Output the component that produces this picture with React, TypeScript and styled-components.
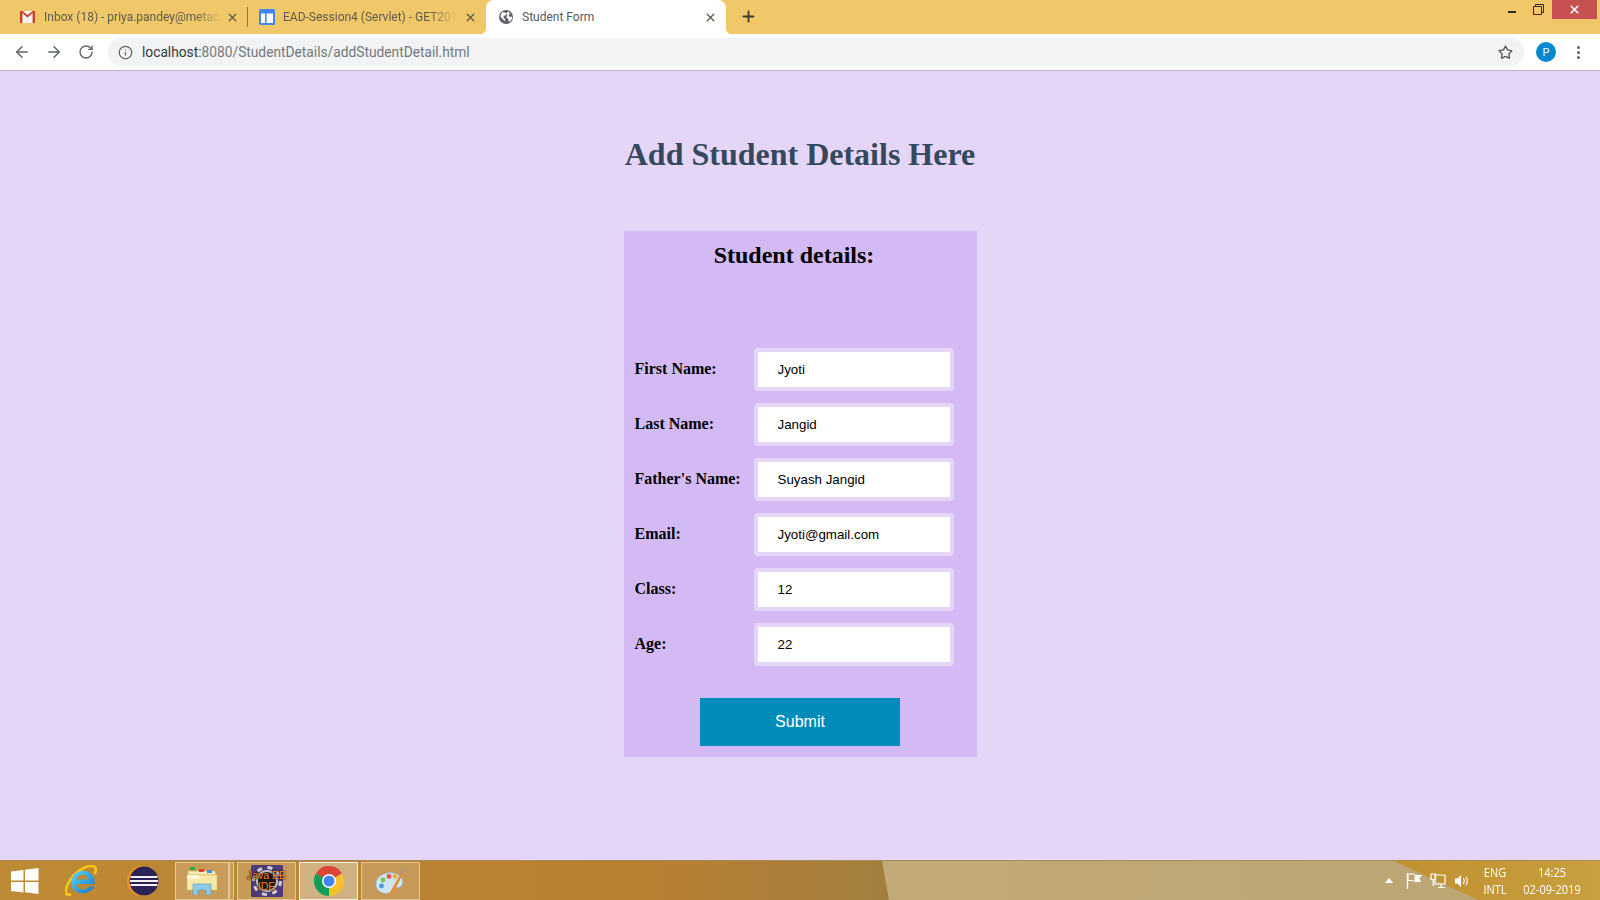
import React from "react";
import styled, { createGlobalStyle } from "styled-components";
import { ArrowLeft, ArrowRight, RotateCw, Info, Star, X, Plus } from "lucide-react";

const Global = createGlobalStyle`
  html, body { margin: 0; padding: 0; height: 100%; overflow: hidden; }
  #root { height: 100%; }
`;

const Screen = styled.div`
  width: 1600px;
  height: 900px;
  display: flex;
  flex-direction: column;
  overflow: hidden;
  font-family: "Roboto", "Liberation Sans", sans-serif;
`;

const TabStrip = styled.div`
  height: 34px;
  flex: none;
  background: #f0c869;
  display: flex;
  align-items: stretch;
  position: relative;
`;

const Tab = styled.div<{ $active?: boolean; $width: number; $pad: number }>`
  position: relative;
  width: ${(p) => p.$width}px;
  flex: none;
  box-sizing: border-box;
  padding-left: ${(p) => p.$pad}px;
  display: flex;
  align-items: center;
  background: ${(p) => (p.$active ? "#ffffff" : "transparent")};
  border-radius: ${(p) => (p.$active ? "8px 8px 0 0" : "0")};
  color: ${(p) => (p.$active ? "#555a60" : "#5e5a4c")};
  font-size: 12px;
  ${(p) =>
    p.$active
      ? `
    &::before, &::after {
      content: "";
      position: absolute;
      bottom: 0;
      width: 6px;
      height: 6px;
    }
    &::before { left: -6px; background: radial-gradient(circle at 0 0, transparent 6px, #fff 6.5px); }
    &::after { right: -6px; background: radial-gradient(circle at 100% 0, transparent 6px, #fff 6.5px); }
  `
      : ""}
`;

const TabTitle = styled.span<{ $fade?: boolean; $width: number; $gap: number }>`
  width: ${(p) => p.$width}px;
  margin-left: ${(p) => p.$gap}px;
  white-space: nowrap;
  overflow: hidden;
  ${(p) =>
    p.$fade
      ? "-webkit-mask-image: linear-gradient(90deg, #000 85%, transparent 100%); mask-image: linear-gradient(90deg, #000 85%, transparent 100%);"
      : ""}
`;

const TabClose = styled(X)<{ $gap: number }>`
  flex: none;
  width: 13px;
  height: 13px;
  margin-left: ${(p) => p.$gap}px;
  color: #5a5648;
  stroke-width: 2.4;
`;

const TabDivider = styled.div`
  width: 1px;
  height: 20px;
  align-self: center;
  background: #8d7a4c;
  flex: none;
`;

const NewTab = styled(Plus)`
  flex: none;
  width: 17px;
  height: 17px;
  margin: 8px 0 0 14px;
  color: #3d3a30;
  stroke-width: 2.6;
`;

const WindowControls = styled.div`
  margin-left: auto;
  display: flex;
  align-items: flex-start;
  padding-right: 3px;
`;

const MinButton = styled.div`
  width: 8px;
  height: 2px;
  margin: 11px 17px 0 0;
  background: #2c2a24;
`;

const RestoreIcon = styled.svg`
  width: 11px;
  height: 11px;
  margin: 4px 8px 0 0;
`;

const CloseButton = styled.div`
  width: 45px;
  height: 19px;
  background: #c75050;
  display: flex;
  align-items: center;
  justify-content: center;
  color: #fff;
`;

const Toolbar = styled.div`
  height: 36px;
  flex: none;
  background: #fff;
  border-bottom: 1px solid #bcb6c4;
  display: flex;
  align-items: center;
  color: #5f6368;
`;

const NavIcon = styled.div<{ $left: number }>`
  flex: none;
  width: 18px;
  height: 18px;
  margin-left: ${(p) => p.$left}px;
  display: flex;
  align-items: center;
  justify-content: center;
  color: #5f6368;
`;

const Omnibox = styled.div`
  flex: none;
  width: 1416px;
  height: 28px;
  margin-left: 13px;
  border-radius: 14px;
  background: #f1f3f4;
  display: flex;
  align-items: center;
  box-sizing: border-box;
  padding: 0 11px 0 10px;
`;

const Url = styled.div`
  margin-left: 9px;
  font-size: 13.75px;
  color: #74787c;
  white-space: nowrap;
  b { font-weight: 400; color: #35383b; }
`;

const StarIcon = styled(Star)`
  margin-left: auto;
  width: 15px;
  height: 15px;
  color: #55585c;
  stroke-width: 2.2;
`;

const Avatar = styled.div`
  flex: none;
  width: 20px;
  height: 20px;
  margin-left: 12px;
  border-radius: 50%;
  background: #0288d1;
  color: #fff;
  font-size: 11px;
  display: flex;
  align-items: center;
  justify-content: center;
`;

const MenuDots = styled.div`
  flex: none;
  margin-left: 21px;
  display: flex;
  flex-direction: column;
  gap: 2px;
  i { display: block; width: 3px; height: 3px; border-radius: 50%; background: #5f6368; }
`;

const Page = styled.main`
  flex: 1;
  min-height: 0;
  background: #e5d6f8;
  display: flex;
  flex-direction: column;
  align-items: center;
`;

const Heading = styled.h1`
  margin: 65px 0 0;
  height: 37px;
  font: bold 32px/37px "Liberation Serif", serif;
  color: #34495e;
  text-align: center;
`;

const Card = styled.form`
  width: 353px;
  height: 526px;
  margin-top: 58px;
  background: #d3baf4;
  display: flex;
  flex-direction: column;
`;

const CardTitle = styled.h2`
  margin: 11px 23px 0 11px;
  font: bold 24px/27px "Liberation Serif", serif;
  color: #000;
  text-align: center;
`;

const Fields = styled.div`
  margin: 79px 23px 0 11px;
  display: grid;
  grid-template-columns: 119px 200px;
  row-gap: 12px;
  align-items: center;
`;

const Label = styled.label`
  font: bold 16px/18px "Liberation Serif", serif;
  color: #000;
  position: relative;
  top: -1px;
`;

const Input = styled.input`
  box-sizing: border-box;
  width: 200px;
  height: 43px;
  padding: 0 0 0 20px;
  border: 4px solid #e5d6f8;
  border-radius: 4px;
  background: #fff;
  color: #000;
  font: 13.33px "Liberation Sans", Arial, sans-serif;
  outline: none;
`;

const Submit = styled.button`
  display: block;
  width: 200px;
  height: 48px;
  margin: 32px auto 0;
  padding: 0;
  border: 0;
  background: #008cba;
  color: #fff;
  font: 16px "Liberation Sans", Arial, sans-serif;
`;

const Taskbar = styled.footer`
  height: 40px;
  flex: none;
  position: relative;
  display: flex;
  align-items: stretch;
  background: #b8832f;
  border-top: 1px solid #a98a55;
  box-sizing: border-box;
  overflow: hidden;
`;

const Wallpaper = styled.svg`
  position: absolute;
  inset: 0;
  width: 100%;
  height: 100%;
`;

const PinnedIcon = styled.div<{ $left: number; $width: number }>`
  position: relative;
  flex: none;
  width: ${(p) => p.$width}px;
  margin-left: ${(p) => p.$left}px;
  display: flex;
  align-items: center;
  justify-content: center;
`;

const TaskButton = styled.div<{ $active?: boolean; $left: number; $width: number }>`
  position: relative;
  flex: none;
  box-sizing: border-box;
  width: ${(p) => p.$width}px;
  margin: 1px 0 0 ${(p) => p.$left}px;
  height: 38px;
  display: flex;
  align-items: center;
  justify-content: center;
  background: ${(p) => (p.$active ? "#d0b182" : "rgba(255,255,255,0.18)")};
  border: 1px solid ${(p) => (p.$active ? "#f7f1e6" : "rgba(255,235,195,0.55)")};
`;

const Tray = styled.div`
  position: relative;
  margin-left: auto;
  display: flex;
  align-items: center;
  color: #fff;
  font-family: "Open Sans", "Liberation Sans", sans-serif;
  font-size: 12.5px;
  padding-right: 16px;
`;

const TrayGlyph = styled.svg<{ $left: number }>`
  flex: none;
  margin-left: ${(p) => p.$left}px;
`;

const TrayText = styled.div<{ $left: number; $width: number }>`
  flex: none;
  width: ${(p) => p.$width}px;
  margin-left: ${(p) => p.$left}px;
  display: flex;
  flex-direction: column;
  align-items: center;
  line-height: 17px;
  white-space: nowrap;
  transform: scaleX(0.88);
`;

const JavaText = styled.div`
  position: absolute;
  inset: 0;
  display: flex;
  flex-direction: column;
  align-items: center;
  justify-content: center;
  font: 10.5px/11px "Liberation Sans", sans-serif;
  white-space: nowrap;
  color: #ff8f1f;
  text-shadow: 0 0 2px #000, 0 0 1px #000;
`;

const JavaIcon = styled.div`
  position: relative;
  width: 32px;
  height: 32px;
`;

const GmailIcon = () => (
  <svg width="15" height="12" viewBox="0 0 15 12">
    <rect width="15" height="12" fill="#f2f2f2" />
    <path d="M0 0h2.4v12H0zM12.6 0H15v12h-2.4z" fill="#d23f31" />
    <path d="M0 0h2.4l5.1 4 5.1-4H15L7.5 6.4z" fill="#d23f31" />
  </svg>
);

const SheetIcon = () => (
  <svg width="16" height="16" viewBox="0 0 16 16">
    <rect width="16" height="16" rx="1.5" fill="#4285f4" />
    <rect x="2" y="4.5" width="4" height="9.5" fill="#fff" />
    <rect x="7.5" y="4.5" width="6.5" height="9.5" fill="#fff" />
  </svg>
);

const GlobeIcon = () => (
  <svg width="14" height="14" viewBox="0 0 14 14">
    <circle cx="7" cy="7" r="7" fill="#5f6368" />
    <path d="M3 2.2l3 .3 1.4 1.3-1 1.6-1.7.4-.2 1.6 1.7 1.8v2L4 9.5 1.3 6.5zM9.5 1.6l1.5 2-1.500 1.500 1 1.600h2.200l.6 1-1.600 3.100-1.900 1-.6-3-1.800-1.300.6-2L7.300 3z" fill="#fff" />
  </svg>
);

const WindowsLogo = () => (
  <svg width="28" height="26" viewBox="0 0 28 26">
    <path d="M0 3.5 12.500 2v10.500H0zM14 1.800 27.500 0v12.500H14zM0 14h12.500v10.500L0 23zM14 14h13.500v12L14 24.200z" fill="#fff" />
  </svg>
);

const IeLogo = () => (
  <svg width="32" height="32" viewBox="0 0 32 32">
    <defs>
      <linearGradient id="ieb" x1="0" y1="0" x2="1" y2="1">
        <stop offset="0" stopColor="#5fd4f7" />
        <stop offset="1" stopColor="#0f78cc" />
      </linearGradient>
    </defs>
    <path d="M6 29C0 32 -1 25 4 17 9 8 21 0 27.500 1c4 .6 4 4.500 2 8" fill="none" stroke="#f5c518" strokeWidth="2.800" />
    <path d="M29.500 19H11.500c.5 6 9 7.500 13 2.500h4.500C24.500 31 8 31 6.500 19 5.500 9 15 4 22 6.500c5.500 1.800 8 7 7.500 12.500zM11.500 14.500h12c-.5-6.500-11-6.500-12 0z" fill="url(#ieb)" fillRule="evenodd" />
  </svg>
);

const EclipseLogo = () => (
  <svg width="32" height="30" viewBox="0 0 32 30">
    <circle cx="15" cy="15" r="15" fill="#f7941e" />
    <circle cx="17" cy="15" r="14.500" fill="#2c2255" />
    <rect x="3.500" y="10" width="27" height="2" fill="#f2f0f7" />
    <rect x="3" y="14" width="28" height="2" fill="#f2f0f7" />
    <rect x="3.500" y="18" width="27" height="2" fill="#f2f0f7" />
  </svg>
);

const FolderLogo = () => (
  <svg width="32" height="28" viewBox="0 0 32 28">
    <path d="M2 4h27l1 4H2z" fill="#f5e9b5" stroke="#c9b56b" strokeWidth=".6" />
    <rect x="4" y="0" width="5" height="3" fill="#2eaa3f" />
    <rect x="13" y="2" width="5" height="3" fill="#d9432f" />
    <rect x="21" y="3" width="5" height="3" fill="#3d8fe0" />
    <path d="M1 8h30v15H1z" fill="#f8eaa6" stroke="#cdb56a" strokeWidth=".6" />
    <path d="M1 8l11 0 3 4H1z" fill="#fdf7d8" />
    <path d="M7 17h18v11h-5v-5h-8v5H7z" fill="#8fcbe8" stroke="#4d9ccb" strokeWidth=".6" />
  </svg>
);

const GearLogo = () => (
  <svg width="32" height="32" viewBox="0 0 32 32">
    <rect width="32" height="32" rx="1.500" fill="#4d3a78" />
    <circle cx="16" cy="16" r="11" fill="#c4c4c4" />
    <circle cx="16" cy="16" r="13.500" fill="none" stroke="#cfcfcf" strokeWidth="3" strokeDasharray="5 5.600" />
    <circle cx="16" cy="16" r="9" fill="#1c1a20" />
  </svg>
);

const ChromeLogo = () => (
  <svg width="30" height="30" viewBox="0 0 30 30">
    <path d="M15 15 2 7.500A15 15 0 0 1 28 7.500z" fill="#db4437" />
    <path d="M15 15 28 7.500A15 15 0 0 1 15 30z" fill="#fbc02d" />
    <path d="M15 15 15 30A15 15 0 0 1 2 7.500z" fill="#0f9d58" />
    <circle cx="15" cy="15" r="7" fill="#fff" />
    <circle cx="15" cy="15" r="5.500" fill="#4285f4" />
  </svg>
);

const PaintLogo = () => (
  <svg width="32" height="32" viewBox="0 0 32 32">
    <path d="M1 19C1 11 10 7 18 8c8 1 11 7 9 12-2 4-6 1-8 4-2 4-7 5-11 4-4-1-7-4-7-9z" fill="#cfe6f3" stroke="#8eb6cf" strokeWidth=".6" />
    <circle cx="8" cy="15" r="2.400" fill="#7cbf4b" />
    <circle cx="14" cy="11.500" r="2.400" fill="#e2574c" />
    <circle cx="20" cy="11.500" r="2.400" fill="#e8b23c" />
    <circle cx="6.500" cy="21" r="2.400" fill="#4a9ad8" />
    <path d="M14 29 26 8l2 1L17 30z" fill="#e88b2e" />
    <path d="M25 9l3-7c2 1 3.500 2 3 3l-3.500 5z" fill="#b59678" />
  </svg>
);

const fields = [
  ["First Name:", "Jyoti"],
  ["Last Name:", "Jangid"],
  ["Father's Name:", "Suyash Jangid"],
  ["Email:", "Jyoti@gmail.com"],
  ["Class:", "12"],
  ["Age:", "22"],
];

export default function App() {
  return (
    <Screen>
      <Global />
      <TabStrip>
        <Tab $width={247} $pad={20}>
          <GmailIcon />
          <TabTitle $fade $width={177} $gap={9}>Inbox (18) - priya.pandey@metacube.com</TabTitle>
          <TabClose $gap={5} />
        </Tab>
        <TabDivider />
        <Tab $width={238} $pad={11}>
          <SheetIcon />
          <TabTitle $fade $width={173} $gap={8}>EAD-Session4 (Servlet) - GET2019</TabTitle>
          <TabClose $gap={8} />
        </Tab>
        <Tab $active $width={240} $pad={13}>
          <GlobeIcon />
          <TabTitle $width={175} $gap={9}>Student Form</TabTitle>
          <TabClose $gap={7} />
        </Tab>
        <NewTab />
        <WindowControls>
          <MinButton />
          <RestoreIcon viewBox="0 0 11 11">
            <path d="M2.500 2.500V.5h8v8H8.500M.5 2.500h8v8h-8z" fill="none" stroke="#2c2a24" />
          </RestoreIcon>
          <CloseButton>
            <X size={13} strokeWidth={3} />
          </CloseButton>
        </WindowControls>
      </TabStrip>
      <Toolbar>
        <NavIcon $left={13}><ArrowLeft size={18} strokeWidth={2} /></NavIcon>
        <NavIcon $left={14}><ArrowRight size={18} strokeWidth={2} /></NavIcon>
        <NavIcon $left={14}><RotateCw size={16} strokeWidth={2} /></NavIcon>
        <Omnibox>
          <Info size={15} strokeWidth={2} />
          <Url><b>localhost:</b>8080/StudentDetails/addStudentDetail.html</Url>
          <StarIcon />
        </Omnibox>
        <Avatar>P</Avatar>
        <MenuDots><i /><i /><i /></MenuDots>
      </Toolbar>
      <Page>
        <Heading>Add Student Details Here</Heading>
        <Card onSubmit={(e) => e.preventDefault()}>
          <CardTitle>Student details:</CardTitle>
          <Fields>
            {fields.map(([label, value]) => (
              <React.Fragment key={label}>
                <Label>{label}</Label>
                <Input defaultValue={value} />
              </React.Fragment>
            ))}
          </Fields>
          <Submit type="submit">Submit</Submit>
        </Card>
      </Page>
      <Taskbar>
        <Wallpaper viewBox="0 0 1600 40" preserveAspectRatio="none">
          <defs>
            <linearGradient id="wall" x1="0" y1="0" x2="1" y2="0">
              <stop offset="0" stopColor="#c2aa78" />
              <stop offset="1" stopColor="#bba575" />
            </linearGradient>
            <linearGradient id="gold" x1="0" y1="0" x2="1" y2="0">
              <stop offset="0" stopColor="#c0902f" />
              <stop offset="1" stopColor="#c8a03e" />
            </linearGradient>
            <linearGradient id="base" x1="0" y1="0" x2="1" y2="0">
              <stop offset="0" stopColor="#bd8a35" />
              <stop offset="0.7" stopColor="#b97f31" />
              <stop offset="1" stopColor="#a27f3e" />
            </linearGradient>
          </defs>
          <rect width="890" height="40" fill="url(#base)" />
          <polygon points="882,0 1600,0 1600,40 889,40" fill="url(#wall)" />
          <polygon points="1394,0 1600,0 1600,40 1478,40" fill="url(#gold)" />
        </Wallpaper>
        <PinnedIcon $left={11} $width={28}><WindowsLogo /></PinnedIcon>
        <PinnedIcon $left={26} $width={32}><IeLogo /></PinnedIcon>
        <PinnedIcon $left={30} $width={32}><EclipseLogo /></PinnedIcon>
        <TaskButton $left={16} $width={54}><FolderLogo /></TaskButton>
        <TaskButton $left={0} $width={5} />
        <TaskButton $left={3} $width={59}>
          <JavaIcon>
            <GearLogo />
            <JavaText><span>Java EE</span><span>IDE</span></JavaText>
          </JavaIcon>
        </TaskButton>
        <TaskButton $active $left={3} $width={59}><ChromeLogo /></TaskButton>
        <TaskButton $left={3} $width={59}><PaintLogo /></TaskButton>
        <Tray>
          <TrayGlyph $left={0} width="8" height="5" viewBox="0 0 8 5"><path d="M4 0l4 5H0z" fill="#fff" /></TrayGlyph>
          <TrayGlyph $left={13} width="16" height="16" viewBox="0 0 16 16">
            <path d="M1.500 0v16" fill="none" stroke="#fff" strokeWidth="1.300" />
            <path d="M2 1h6l1 1.500h6.500L13 5.500l1.500 3H8L7 7.500H2z" fill="none" stroke="#fff" />
            <path d="M8.500 3h6L12.500 5.500l1.200 2.500H8.500z" fill="#fff" />
          </TrayGlyph>
          <TrayGlyph $left={8} width="16" height="16" viewBox="0 0 16 16">
            <path d="M5 2h10v9H5zM8 14.500h7M11 11v3.500M1 1h4.500v5.500H1zM3.200 6.500V13" fill="none" stroke="#fff" strokeWidth="1.200" />
          </TrayGlyph>
          <TrayGlyph $left={8} width="16" height="16" viewBox="0 0 16 16">
            <path d="M1 5.500h2.500L7 2v12l-3.500-3.500H1z" fill="#fff" />
            <path d="M9.500 5c1 1.800 1 4.200 0 6M12 3.500c1.600 2.800 1.600 6.200 0 9" fill="none" stroke="#fff" strokeWidth="1.100" />
          </TrayGlyph>
          <TrayText $left={10} $width={30}><span>ENG</span><span>INTL</span></TrayText>
          <TrayText $left={10} $width={64}><span>14:25</span><span>02-09-2019</span></TrayText>
        </Tray>
      </Taskbar>
    </Screen>
  );
}
